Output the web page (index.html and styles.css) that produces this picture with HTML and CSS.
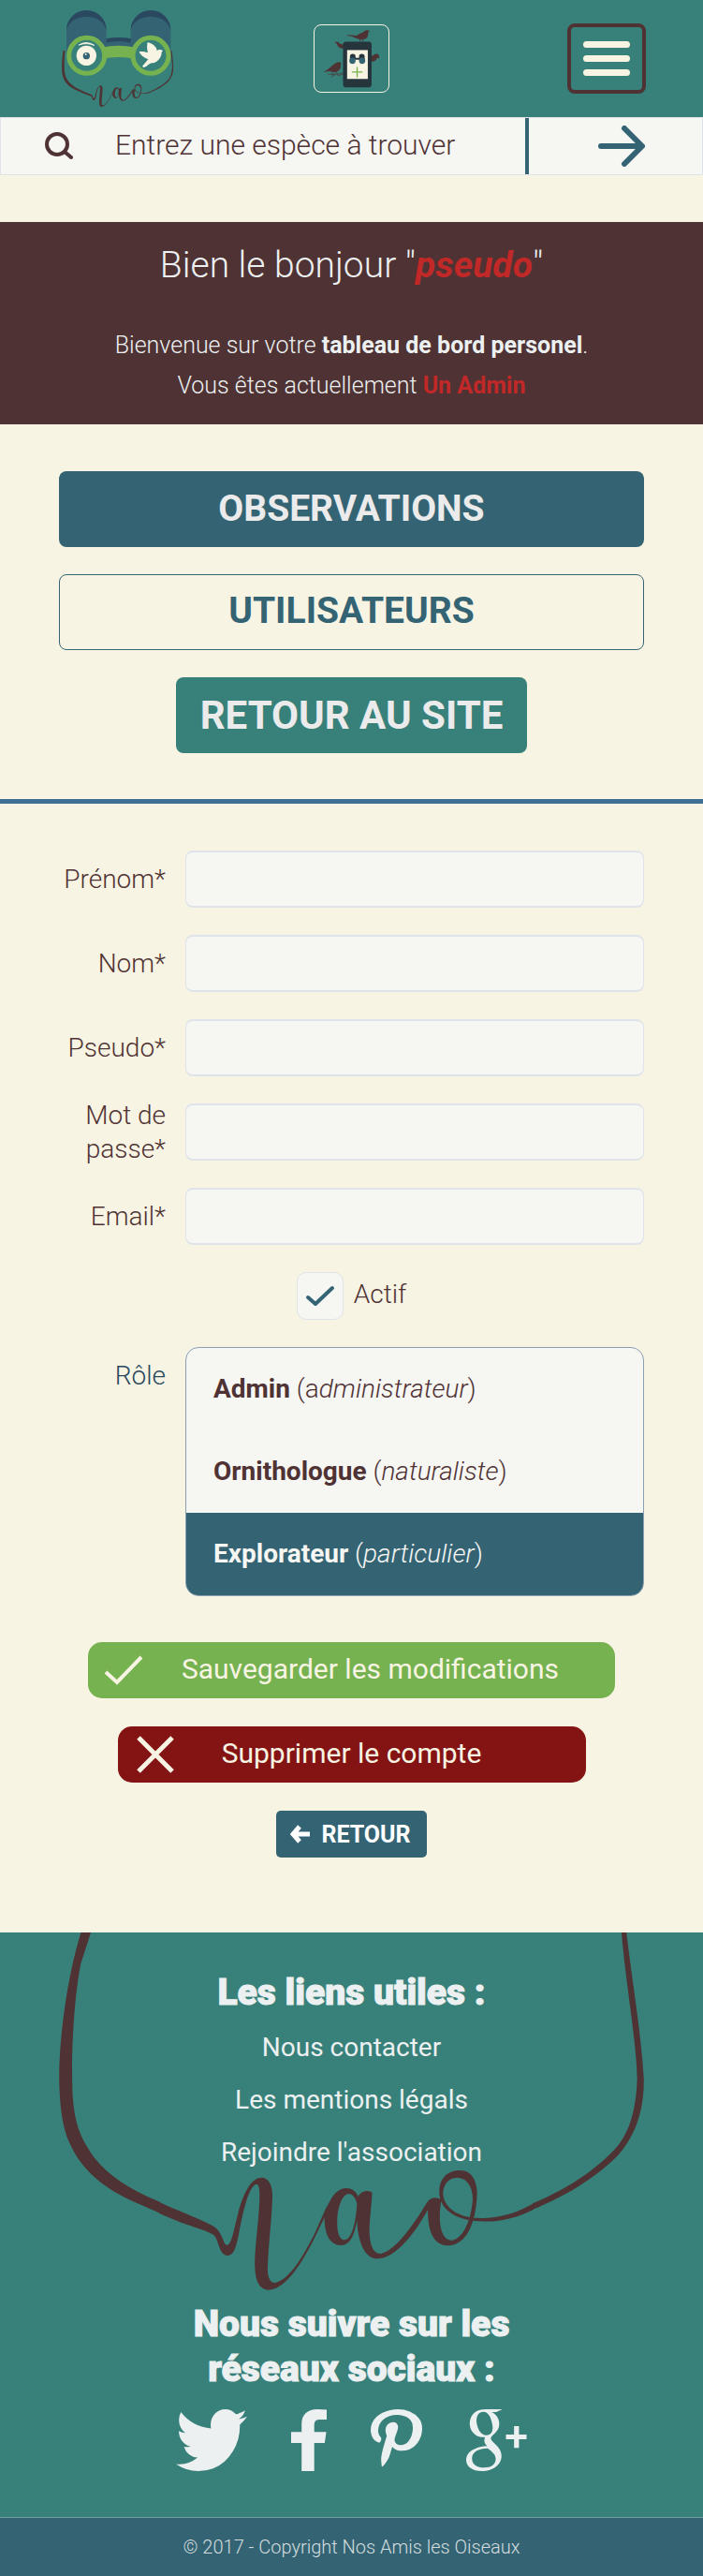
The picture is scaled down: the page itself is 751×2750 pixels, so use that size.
FILE: index.html
```html
<!DOCTYPE html>
<html lang="fr">
<head>
<meta charset="utf-8">
<meta name="viewport" content="width=device-width, initial-scale=1">
<title>Nos Amis les Oiseaux – Tableau de bord</title>
<link rel="stylesheet" href="styles.css">
</head>
<body>
<header class="header">
  <a class="brand" href="#" aria-label="Accueil">
    <svg class="brand-logo" viewBox="195 30 366 321" aria-hidden="true">
      <svg x="198" y="165" width="358" height="181" viewBox="63 67 625 316"><use href="#cord"/></svg>
      <path d="M338 127Q380 119 422 127V165H338Z" fill="#2a4860"/>
      <path d="M338 140Q380 130 422 140V165H338Z" fill="#346474"/>
      <path d="M213 185V99a64 63 0 0 1 128 0V185ZM419 185V99a64 63 0 0 1 128 0V185Z" fill="#346474"/>
      <path d="M213 99a64 63 0 0 1 128 0C325 42 229 42 213 99ZM419 99a64 63 0 0 1 128 0C531 42 435 42 419 99Z" fill="#2a4860"/>
      <path d="M325 155Q380 143 435 155V193Q380 179 325 193Z" fill="#76b24f"/>
      <circle cx="278" cy="181" r="57" fill="#38817a" stroke="#76b24f" stroke-width="15"/>
      <circle cx="483" cy="181" r="57" fill="#38817a" stroke="#76b24f" stroke-width="15"/>
      <circle cx="277" cy="181" r="32" fill="#f8f4e3"/>
      <circle cx="277" cy="182" r="11" fill="#346474"/>
      <circle cx="275" cy="177" r="3" fill="#f8f4e3"/>
      <path d="M253 147Q277 132 302 148Q277 138 253 147Z" fill="#f8f4e3" stroke="#f8f4e3" stroke-width="3"/>
      <path d="M473 138C490 143 503 153 503 166C508 160 515 161 522 165L518 170C518 190 501 205 487 205C477 206 471 218 460 219L456 215L475 193C461 187 450 180 446 168C456 167 464 169 474 171C471 161 470 150 473 138Z" fill="#f8f4e3"/>
    </svg>
  </a>
  <a class="add-link" href="#" aria-label="Ajouter une observation">
    <svg class="add-icon" viewBox="130 92 182 188" aria-hidden="true">
      <g fill="#4f3233">
        <path d="M207 111L238 113C247 104 259 104 263 98C268 94 275 95 279 98L274 103C276 118 266 126 252 126C240 126 235 117 207 113Z"/>
        <path d="M167 134C174 130 180 132 183 138L196 142V154C182 154 176 147 174 138Z"/>
        <path d="M282 178C291 177 295 170 303 171C309 173 310 179 309 187L303 183C301 192 292 198 282 195Z"/>
        <path d="M131 229C150 221 158 207 174 199C180 195 187 198 189 202L186 207C189 221 177 230 166 230L150 226Z"/>
      </g>
      <path d="M248 125V132M257 125V132M146 236H170L195 232M170 236L156 245M158 230L163 239M172 230L178 240L195 236" fill="none" stroke="#4f3233" stroke-width="2"/>
      <rect x="194" y="132" width="91" height="146" rx="10" fill="#26343c"/>
      <path d="M207 159H273V251H207Z" fill="#f8f4e3"/>
      <path d="M216 190V180a9 9 0 0 1 18 0v4H245v-4a9 9 0 0 1 18 0v10Z" fill="#26343c"/>
      <circle cx="224" cy="193" r="10" fill="#346474"/><circle cx="255" cy="193" r="10" fill="#346474"/>
      <path d="M222 229H256M239 213V246" stroke="#76b24f" stroke-width="4"/>
    </svg>
  </a>
  <button class="menu-button" type="button" aria-label="Menu">
    <span class="menu-bar"></span><span class="menu-bar"></span><span class="menu-bar"></span>
  </button>
</header>

<form class="search" role="search">
  <label class="search-label" for="search-input" aria-label="Rechercher">
    <svg class="search-icon" viewBox="0 0 30 30" aria-hidden="true"><circle cx="13" cy="13" r="11" fill="none" stroke="#4f3233" stroke-width="4"/><path d="M21 21L28 27" stroke="#4f3233" stroke-width="4" stroke-linecap="round"/></svg>
  </label>
  <input class="search-input" id="search-input" type="text" placeholder="Entrez une espèce à trouver">
  <button class="search-submit" type="submit" aria-label="Lancer la recherche">
    <svg class="search-arrow" viewBox="0 0 50 44" aria-hidden="true"><path d="M3 22H46M28 3L47 22L28 41" fill="none" stroke="#346474" stroke-width="6" stroke-linecap="round" stroke-linejoin="round"/></svg>
  </button>
</form>

<main>
  <section class="welcome">
    <h1 class="welcome-title">Bien le bonjour "<em class="accent">pseudo</em>"</h1>
    <p class="welcome-text">Bienvenue sur votre <strong>tableau de bord personel</strong>.</p>
    <p class="welcome-text">Vous êtes actuellement <strong class="accent">Un Admin</strong></p>
  </section>

  <nav class="tabs" aria-label="Tableau de bord">
    <a class="tab tab-active" href="#">OBSERVATIONS</a>
    <a class="tab tab-outline" href="#">UTILISATEURS</a>
    <a class="tab tab-site" href="#">RETOUR AU SITE</a>
  </nav>

  <form class="account">
    <div class="field"><label class="field-label" for="prenom">Prénom*</label><input class="field-input" id="prenom" type="text"></div>
    <div class="field"><label class="field-label" for="nom">Nom*</label><input class="field-input" id="nom" type="text"></div>
    <div class="field"><label class="field-label" for="pseudo">Pseudo*</label><input class="field-input" id="pseudo" type="text"></div>
    <div class="field"><label class="field-label" for="passe">Mot de passe*</label><input class="field-input" id="passe" type="password"></div>
    <div class="field"><label class="field-label" for="email">Email*</label><input class="field-input" id="email" type="email"></div>
    <label class="active-row"><input class="active-check" type="checkbox" checked>
      <span class="active-box"><svg class="active-mark" viewBox="0 0 32 24" aria-hidden="true"><path d="M3 13L11 20L29 3" fill="none" stroke="#346474" stroke-width="4" stroke-linecap="round" stroke-linejoin="round"/></svg></span>
      <span class="active-text">Actif</span></label>
    <div class="role" role="radiogroup" aria-labelledby="role-label">
      <span class="role-label" id="role-label">Rôle</span>
      <div class="role-list">
        <label class="role-item"><input class="role-radio" type="radio" name="role"><span><b>Admin</b> (a<i>dministrateur</i>)</span></label>
        <label class="role-item"><input class="role-radio" type="radio" name="role"><span><b>Ornithologue</b> (<i>naturaliste</i>)</span></label>
        <label class="role-item"><input class="role-radio" type="radio" name="role" checked><span><b>Explorateur</b> (<i>particulier</i>)</span></label>
      </div>
    </div>
    <div class="actions">
      <button class="action action-save" type="submit">
        <svg class="action-icon" viewBox="0 0 42 33" aria-hidden="true"><path d="M2 18L14 29L40 2" fill="none" stroke="#f8f4e3" stroke-width="4"/></svg>
        <span class="action-text">Sauvegarder les modifications</span>
      </button>
      <button class="action action-delete" type="button">
        <svg class="action-icon" viewBox="0 0 40 40" aria-hidden="true"><path d="M2 2L38 38M38 2L2 38" stroke="#f8f4e3" stroke-width="5"/></svg>
        <span class="action-text">Supprimer le compte</span>
      </button>
      <a class="back" href="#">
        <svg class="back-icon" viewBox="0 0 21 20" aria-hidden="true"><path d="M10 2L3 10L10 18M4 10H21" fill="none" stroke="#fff" stroke-width="5"/></svg>
        RETOUR
      </a>
    </div>
  </form>
</main>

<footer class="footer">
  <svg class="footer-cord" viewBox="0 0 751 400" aria-hidden="true">
    <g id="cord" fill="#4f3233">
      <g transform="translate(0 -13) scale(.479 .3333)">
        <path d="M181 37C150 180 132 370 132 510C134 640 145 700 175 765C225 865 290 895 357 938V902C290 865 240 815 210 760C180 700 166 650 162 560C158 430 165 250 180 140L203 37Z"/>
        <path d="M1386 37C1395 200 1421 400 1421 510C1418 620 1400 690 1370 735C1310 825 1240 875 1188 907V926C1270 880 1340 810 1380 750C1415 690 1436 620 1436 510C1430 360 1410 200 1397 37Z"/>
      </g>
      <g transform="translate(170 217) scale(.3333)">
        <path d="M0 212C70 245 130 265 175 290C205 310 205 350 218 350C232 350 240 300 255 240C275 170 300 134 328 134C352 134 364 160 363 195C362 260 350 350 348 420C346 450 355 471 370 471C420 465 470 370 500 310L540 220L532 258C500 320 430 494 348 494C310 490 305 440 307 390C310 330 322 250 322 190C322 165 318 155 312 155C290 160 275 220 262 280C250 340 245 384 220 384C190 382 193 335 175 318C150 300 90 290 0 248Z"/>
        <path fill-rule="evenodd" d="M530 255C545 200 570 168 600 168C620 168 632 180 638 195C645 178 668 172 683 182C680 230 674 270 674 310C676 350 685 378 710 378C760 370 825 270 862 208V236C820 310 760 394 695 394C655 390 636 330 634 270C625 325 610 351 583 351C545 351 528 310 530 255ZM608 186C620 186 630 200 634 217C630 290 614 334 594 334C575 334 569 300 571 265C574 220 590 186 608 186Z"/>
        <path d="M862 210C868 198 890 194 905 205C895 250 895 335 938 335C975 330 998 270 1004 215C1010 165 985 134 955 134C925 134 910 160 910 185C912 230 960 262 1020 263C1090 268 1150 245 1200 217V236C1150 262 1090 278 1030 274C950 272 898 235 898 180C898 135 925 111 965 111C1005 111 1020 150 1019 190C1015 280 985 352 925 352C875 350 857 300 862 210Z"/>
      </g>
    </g>
  </svg>
  <div class="footer-content">
    <h2 class="footer-title">Les liens utiles :</h2>
    <nav class="footer-links" aria-label="Liens utiles">
      <a class="footer-link" href="#">Nous contacter</a>
      <a class="footer-link" href="#">Les mentions légals</a>
      <a class="footer-link" href="#">Rejoindre l'association</a>
    </nav>
    <h2 class="footer-title">Nous suivre sur les<br>réseaux sociaux :</h2>
    <div class="socials">
      <a class="social" href="#" aria-label="Twitter"><svg width="76" height="66" viewBox="108 256 1576 1280" preserveAspectRatio="none"><path d="M1684 408q-67 98-162 167 1 14 1 42 0 130-38 259.5t-115.5 248.5-184.5 210.5-258 146-323 54.5q-271 0-496-145 35 4 78 4 225 0 401-138-105-2-188-64.5t-114-159.5q33 5 61 5 43 0 85-11-112-23-185.5-111.5t-73.5-205.5v-4q68 38 146 41-66-44-105-115t-39-154q0-88 44-163 121 149 294.5 238.5t371.5 99.5q-8-38-8-74 0-134 94.5-228.5t228.5-94.5q140 0 236 102 109-21 205-78-37 115-142 178 93-10 186-50z"/></svg></a>
      <a class="social" href="#" aria-label="Facebook"><svg width="38" height="66" viewBox="479 0 864 1664" preserveAspectRatio="none"><path d="M1343 12v264h-157q-86 0-116 36t-30 108v189h293l-39 296h-254v759h-306v-759h-255v-296h255v-218q0-186 104-288.5t277-102.5q147 0 228 12z"/></svg></a>
      <a class="social" href="#" aria-label="Pinterest"><svg width="55" height="66" viewBox="256 0 1280 1792" preserveAspectRatio="none"><path d="M256 597q0-108 37.5-203.5t103.5-166.5 152-123 185-78 202-26q158 0 294 66.5t221 193.5 85 287q0 96-19 188t-60 177-100 149.5-145 103-189 38.5q-68 0-135-32t-96-88q-10 39-28 112.5t-23.5 95-20.5 71-26 71-32 62.5-46 77.5-62 86.5l-14 5-9-10q-15-157-15-188 0-92 21.5-206.5t66.5-287.5 52-203q-32-65-32-169 0-83 52-156t132-73q61 0 95 40.5t34 102.5q0 66-44 191t-44 187q0 63 45 104.5t109 41.5q55 0 102-25t78.5-68 56-95 38-110.5 20-111 6.5-99.5q0-173-109.5-269.5t-285.5-96.5q-200 0-334 129.5t-134 328.5q0 44 12.5 85t27 65 27 45.5 12.5 30.5q0 28-15 73t-37 45q-2 0-17-3-51-15-90.5-56t-61-94.5-32.5-108-11-106.5z"/></svg></a>
      <a class="social" href="#" aria-label="Google Plus"><svg width="65" height="66" viewBox="1040 396 136 198" preserveAspectRatio="none"><path fill-rule="evenodd" d="M1121 396L1107 405H1097C1108 413 1114 427 1114 443C1114 470 1095 478 1095 490C1097 505 1119 515 1119 545C1119 575 1098 594 1075 594C1052 594 1040 578 1040 558C1040 530 1062 516 1087 514C1081 505 1079 498 1082 485C1060 488 1048 465 1048 442C1048 415 1060 396 1083 396ZM1079 404C1067 404 1063 418 1063 435C1065 460 1073 479 1085 479C1097 479 1100 465 1099 450C1097 425 1090 404 1079 404ZM1088 521C1066 521 1053 534 1053 554C1053 572 1064 583 1080 583C1096 583 1106 573 1106 556C1106 540 1098 532 1088 521ZM1147 450h11v27h17v15h-17v28h-11v-28h-18v-15h18z"/></svg></a>
    </div>
  </div>
  <p class="copyright">© 2017 - Copyright Nos Amis les Oiseaux</p>
</footer>
</body>
</html>
```

FILE: styles.css
```css
:root {
  --teal: #38817a;
  --blue: #346474;
  --brown: #4f3233;
  --cream: #f8f4e3;
  --paper: #f6f6f3;
  --light: #ecf0f1;
  --line: #dfe4ea;
  --red: #c12828;
}
* { box-sizing: border-box; }
body {
  margin: 0;
  background: var(--cream);
  color: var(--brown);
  font-family: Roboto, "Open Sans", sans-serif;
  font-size: 30px;
  font-weight: 300;
}
h1, h2, p { margin: 0; }
a { color: inherit; text-decoration: none; }
button, input { font: inherit; }
svg { display: block; }
b, strong { font-weight: 700; }

.header {
  display: grid;
  grid-template-columns: 1fr auto 1fr;
  align-items: center;
  height: 125px;
  padding: 0 61px;
  background: var(--teal);
}
.brand { justify-self: start; padding-left: 4px; }
.brand-logo { width: 122px; height: 107px; }
.add-link {
  display: grid;
  place-items: center;
  width: 81px;
  height: 73px;
  border: 1px solid var(--cream);
  border-radius: 8px;
}
.add-icon { width: 61px; height: 63px; }
.menu-button {
  display: flex;
  flex-direction: column;
  justify-content: center;
  justify-self: end;
  gap: 8px;
  width: 84px;
  height: 75px;
  padding: 0 13px;
  border: 4px solid var(--brown);
  border-radius: 8px;
  background: none;
}
.menu-bar { height: 7px; border-radius: 4px; background: var(--cream); }

.search {
  display: flex;
  height: 62px;
  border: 1px solid var(--line);
  background: var(--paper);
}
.search-label { display: flex; align-items: center; padding: 0 45px 0 47px; }
.search-icon { width: 30px; height: 30px; }
.search-input {
  flex: 1;
  min-width: 0;
  padding: 0 0 4px;
  border: 0;
  background: none;
  color: var(--brown);
}
.search-input::placeholder { color: var(--brown); opacity: 1; }
.search-submit {
  display: grid;
  place-items: center;
  width: 189px;
  padding: 0 0 0 12px;
  border: 0;
  border-left: 4px solid var(--blue);
  background: none;
}
.search-arrow { width: 50px; height: 44px; }

.welcome {
  margin-top: 50px;
  padding: 22px 20px 20px;
  background: var(--brown);
  color: var(--light);
  text-align: center;
}
.welcome-title { margin-bottom: 40px; font-size: 39px; font-weight: 300; line-height: 48px; }
.welcome-text { font-size: 25px; line-height: 43px; }
.accent { color: var(--red); font-weight: 700; }

.tabs {
  display: flex;
  flex-direction: column;
  align-items: center;
  gap: 29px;
  padding: 50px 63px 49px;
  border-bottom: 5px solid #3f6f92;
}
.tab {
  width: 100%;
  height: 81px;
  border-radius: 8px;
  font-size: 39px;
  font-weight: 700;
  line-height: 81px;
  text-align: center;
  color: #ebebeb;
}
.tab-active { background: var(--blue); }
.tab-outline { border: 1px solid var(--blue); line-height: 77px; color: var(--blue); }
.tab-site { width: 60%; background: var(--teal); font-size: 42px; }

.account { display: flex; flex-direction: column; gap: 29px; padding: 50px 63px 80px; font-size: 28px; }
.field, .role { display: grid; grid-template-columns: 114px 1fr; column-gap: 21px; }
.field { grid-template-rows: 61px; align-items: center; }
.field-label, .role-label { line-height: 36px; text-align: right; }
.field-input {
  width: 100%;
  height: 61px;
  padding: 0 16px;
  border: 1px solid var(--line);
  border-width: 2px 1px;
  border-radius: 8px;
  background: var(--paper);
  color: var(--brown);
}
.active-row { display: flex; align-items: center; align-self: center; gap: 11px; line-height: 36px; }
.active-text { padding-bottom: 4px; }
.active-check, .role-radio { position: absolute; opacity: 0; }
.active-box {
  display: grid;
  place-items: center;
  width: 50px;
  height: 51px;
  border: 1px solid var(--line);
  border-radius: 10px;
  background: var(--paper);
}
.active-mark { width: 32px; height: 24px; }
.active-check:not(:checked) + .active-box .active-mark { visibility: hidden; }
.role-label { padding-top: 13px; color: #2a4860; }
.role-list {
  overflow: hidden;
  border: 1px solid #8a9fb0;
  border-radius: 14px;
  background: var(--paper);
}
.role-item { display: block; height: 88px; padding-left: 29px; line-height: 88px; }
.role-item:has(:checked) { background: var(--blue); color: var(--paper); }

.actions { display: flex; flex-direction: column; align-items: center; gap: 30px; padding-top: 20px; }
.action {
  display: grid;
  align-items: center;
  height: 60px;
  border: 0;
  border-radius: 15px;
  color: var(--cream);
  font-size: 30px;
  font-weight: 400;
}
.action-icon { width: 100%; }
.action-text { padding-bottom: 4px; }
.action-save { grid-template-columns: 42px 1fr; width: 90%; padding: 0 19px 0 17px; background: #76b24f; }
.action-delete { grid-template-columns: 40px 1fr 40px; width: 80%; padding: 0 20px; background: #841414; }
.back {
  display: flex;
  align-items: center;
  gap: 12px;
  height: 50px;
  padding: 0 17px 0 15px;
  border-radius: 5px;
  background: var(--blue);
  color: #fff;
  font-size: 25px;
  font-weight: 700;
}
.back-icon { width: 21px; height: 20px; }

.footer { position: relative; background: var(--teal); color: var(--light); text-align: center; }
.footer-cord { position: absolute; top: 0; left: 0; width: 100%; }
.footer-content { position: relative; padding: 40px 20px 49px; }
.footer-title { font-size: 39px; font-weight: 900; line-height: 48px; -webkit-text-stroke: 1px var(--light); }
.footer-links { display: flex; flex-direction: column; align-items: center; padding: 7px 0 131px; }
.footer-link { font-size: 28px; line-height: 56px; font-weight: 400; }
.socials { display: flex; justify-content: center; gap: 47px; padding-top: 19px; }
.social { fill: var(--light); }
.copyright {
  position: relative;
  border-top: 1px solid #6f9fa5;
  background: var(--blue);
  color: #d3dcdf;
  font-size: 20px;
  line-height: 62px;
}
```
